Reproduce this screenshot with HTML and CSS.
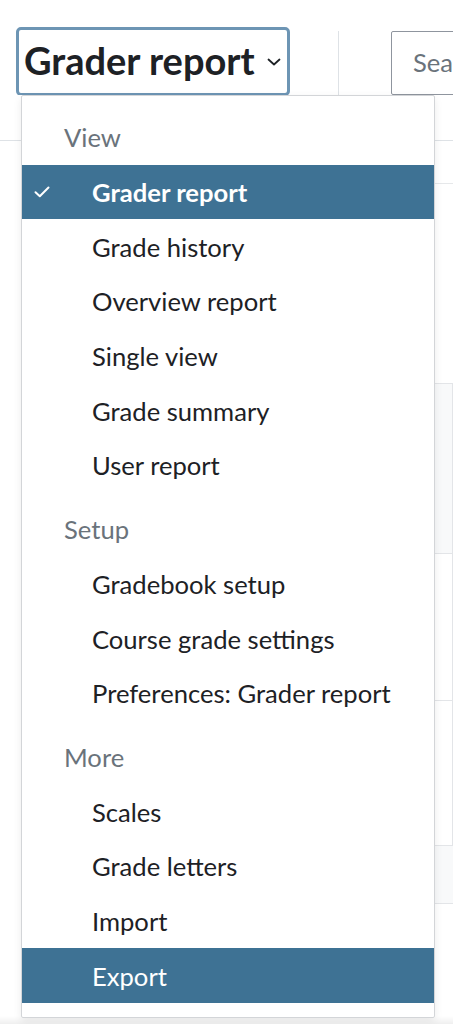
FILE: index.html
```html
<!DOCTYPE html>
<html lang="en">
<head>
<meta charset="utf-8">
<title>Grader report</title>
<link rel="stylesheet" href="styles.css">
</head>
<body>
<div class="topbar">
  <button class="selector" type="button">
    <span class="selector-label">Grader report</span>
    <svg class="chevron" width="14" height="8" viewBox="0 0 14 8" aria-hidden="true"><path d="M1.5 1.5 L7 6.5 L12.5 1.5" fill="none" stroke="#1d2125" stroke-width="1.8" stroke-linecap="round" stroke-linejoin="round"/></svg>
  </button>
  <div class="separator"></div>
  <div class="search"><span class="placeholder">Search users</span></div>
</div>
<div class="toolbar"></div>
<div class="grid">
  <div class="grid-row first"></div>
  <div class="grid-spacer"></div>
  <div class="grid-box">
    <div class="box-row shaded"></div>
    <div class="box-row"></div>
    <div class="box-row last"></div>
  </div>
  <div class="grid-row footer"></div>
</div>
<div class="bottom-band"></div>

<div class="menu" role="menu">
  <div class="menu-header">View</div>
  <div class="menu-item active">
    <svg class="check" width="16" height="12" viewBox="0 0 16 12" aria-hidden="true"><path d="M1.5 6.2 L5.8 10.2 L14.5 1.5" fill="none" stroke="#ffffff" stroke-width="2" stroke-linecap="round" stroke-linejoin="round"/></svg>
    <span>Grader report</span>
  </div>
  <div class="menu-item">Grade history</div>
  <div class="menu-item">Overview report</div>
  <div class="menu-item">Single view</div>
  <div class="menu-item">Grade summary</div>
  <div class="menu-item">User report</div>
  <div class="menu-header spaced">Setup</div>
  <div class="menu-item">Gradebook setup</div>
  <div class="menu-item">Course grade settings</div>
  <div class="menu-item">Preferences: Grader report</div>
  <div class="menu-header spaced">More</div>
  <div class="menu-item">Scales</div>
  <div class="menu-item">Grade letters</div>
  <div class="menu-item">Import</div>
  <div class="menu-item hover">Export</div>
</div>
</body>
</html>
```

FILE: styles.css
```css
* { box-sizing: border-box; }

html, body {
  margin: 0;
  padding: 0;
  background: #ffffff;
  font-family: "Lato", "Liberation Sans", sans-serif;
  color: #1d2125;
  overflow: hidden;
}

body {
  position: relative;
  height: 1024px;
}

.topbar {
  display: flex;
  align-items: flex-start;
  padding: 27px 0 0 16px;
  height: 95px;
  overflow: hidden;
}

.selector {
  flex: 0 0 auto;
  display: flex;
  align-items: center;
  width: 274px;
  height: 69px;
  padding: 0 0 4px 5px;
  border: 3px solid #6d95b4;
  border-radius: 5px;
  background: #ffffff;
  font-family: inherit;
  color: #1d2125;
  white-space: nowrap;
  cursor: pointer;
}

.selector-label {
  font-size: 38px;
  font-weight: 700;
}

.chevron {
  margin-left: auto;
  margin-right: 6px;
  margin-top: 4px;
}

.separator {
  flex: 0 0 1px;
  height: 64px;
  margin: 4px 0 0 48px;
  background: #dee2e6;
}

.search {
  display: flex;
  align-items: center;
  flex: 0 0 220px;
  height: 64px;
  margin: 4px 0 0 52px;
  padding: 0 0 2px 21px;
  border: 1.5px solid #8f959e;
  border-radius: 2px;
  white-space: nowrap;
}

.placeholder {
  font-size: 25.6px;
  color: #6a737b;
}

.toolbar {
  height: 46px;
  border-bottom: 1px solid #dee2e6;
}

.grid {
  margin-left: 200px;
  width: 253px;
}

.grid-row.first {
  height: 43px;
  border-bottom: 1px solid #e6e8ea;
}

.grid-spacer {
  height: 199px;
}

.grid-box {
  width: 253px;
  border: 1px solid #e3e5e8;
}

.box-row {
  height: 147px;
  border-bottom: 1px solid #e3e5e8;
}

.box-row.shaded {
  height: 170px;
  background: #f8f9fa;
}

.box-row.last {
  height: 144px;
  border-bottom: none;
}

.grid-row.footer {
  height: 58px;
  background: #f8f9fa;
  border-bottom: 1px solid #e3e5e8;
}

.bottom-band {
  position: absolute;
  left: 0;
  right: 0;
  bottom: 0;
  height: 8px;
  background: linear-gradient(#ffffff, #efefef);
}

.menu {
  position: absolute;
  left: 21px;
  top: 95px;
  width: 414px;
  padding: 14px 0;
  background: #ffffff;
  border: 1px solid #d3d5d8;
  border-radius: 2px;
  box-shadow: 0 3px 8px rgba(0, 0, 0, 0.08);
  z-index: 10;
}

.menu-header {
  display: flex;
  align-items: center;
  height: 54.7px;
  padding-left: 42px;
  font-size: 25.6px;
  color: #6a737b;
}

.menu-header.spaced {
  margin-top: 9px;
}

.menu-item {
  position: relative;
  display: flex;
  align-items: center;
  height: 54.7px;
  padding-left: 70px;
  font-size: 25.6px;
  color: #1d2125;
  white-space: nowrap;
}

.menu-item.active {
  background: #3e7294;
  color: #ffffff;
  font-weight: 700;
}

.menu-item.hover {
  background: #3e7294;
  color: #ffffff;
}

.check {
  position: absolute;
  left: 12px;
  top: 21px;
}
```
